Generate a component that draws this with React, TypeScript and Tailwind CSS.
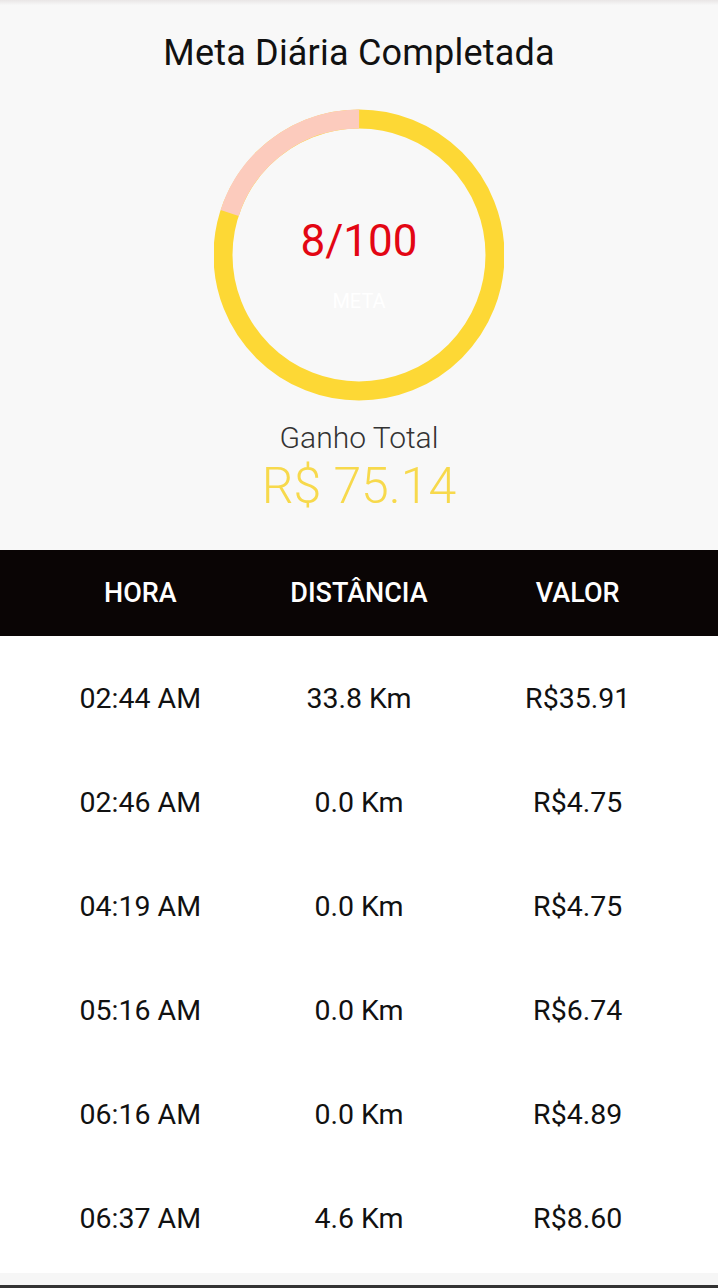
import React from "react";

const rows = [
  ["02:44 AM", "33.8 Km", "R$35.91"],
  ["02:46 AM", "0.0 Km", "R$4.75"],
  ["04:19 AM", "0.0 Km", "R$4.75"],
  ["05:16 AM", "0.0 Km", "R$6.74"],
  ["06:16 AM", "0.0 Km", "R$4.89"],
  ["06:37 AM", "4.6 Km", "R$8.60"],
];

function Ring() {
  const r = 136;
  const c = 2 * Math.PI * r;
  const pinkFrac = 72 / 360;
  return (
    <div className="relative w-[290px] h-[296px]">
      <svg width="290" height="296" viewBox="0 0 290 296" className="absolute inset-0">
        <circle cx="145" cy="148" r={r} fill="none" stroke="#fdd835" strokeWidth="19" />
        <circle
          cx="145"
          cy="148"
          r={r}
          fill="none"
          stroke="#fccbbd"
          strokeWidth="19"
          strokeDasharray={`${c * pinkFrac} ${c}`}
          transform="rotate(-162 145 148)"
        />
      </svg>
      <div className="absolute inset-0 flex flex-col items-center">
        <div className="mt-[112px] text-[44px] leading-none text-[#e30613]">8/100</div>
        <div className="mt-[28px] text-[20px] leading-none text-white">META</div>
      </div>
    </div>
  );
}

export default function App() {
  return (
    <div
      className="w-[718px] h-[1288px] bg-white flex flex-col overflow-hidden"
      style={{ fontFamily: "Roboto, 'Open Sans', sans-serif" }}
    >
      <div className="h-[5px] bg-gradient-to-b from-[#e9e6e6] to-[#f7f7f7]" />
      <div className="bg-[#f8f8f8] h-[545px] flex flex-col items-center">
        <div className="mt-[30px] text-[36px] leading-none text-[#111] tracking-[0.2px]">
          Meta Diária Completada
        </div>
        <div className="mt-[36px]">
          <Ring />
        </div>
        <div className="mt-[20px] text-[30px] leading-none text-[#333] font-light">Ganho Total</div>
        <div className="mt-[8px] text-[50px] leading-none text-[#f7d94c] font-light">R$ 75.14</div>
      </div>
      <div className="h-[86px] bg-[#0a0505] px-[31px] grid grid-cols-3 items-center text-white text-[27px] font-medium">
        <div className="text-center">HORA</div>
        <div className="text-center">DISTÂNCIA</div>
        <div className="text-center">VALOR</div>
      </div>
      <div className="pt-[11px] px-[31px] flex flex-col">
        {rows.map((r) => (
          <div key={r[0]} className="h-[104px] grid grid-cols-3 items-center text-[28.5px] text-[#111]">
            <div className="text-center">{r[0]}</div>
            <div className="text-center">{r[1]}</div>
            <div className="text-center">{r[2]}</div>
          </div>
        ))}
      </div>
      <div className="flex-1" />
      <div className="h-[12px] bg-[#f6f6f6]" />
      <div className="h-[3px] bg-[#333]" />
    </div>
  );
}
